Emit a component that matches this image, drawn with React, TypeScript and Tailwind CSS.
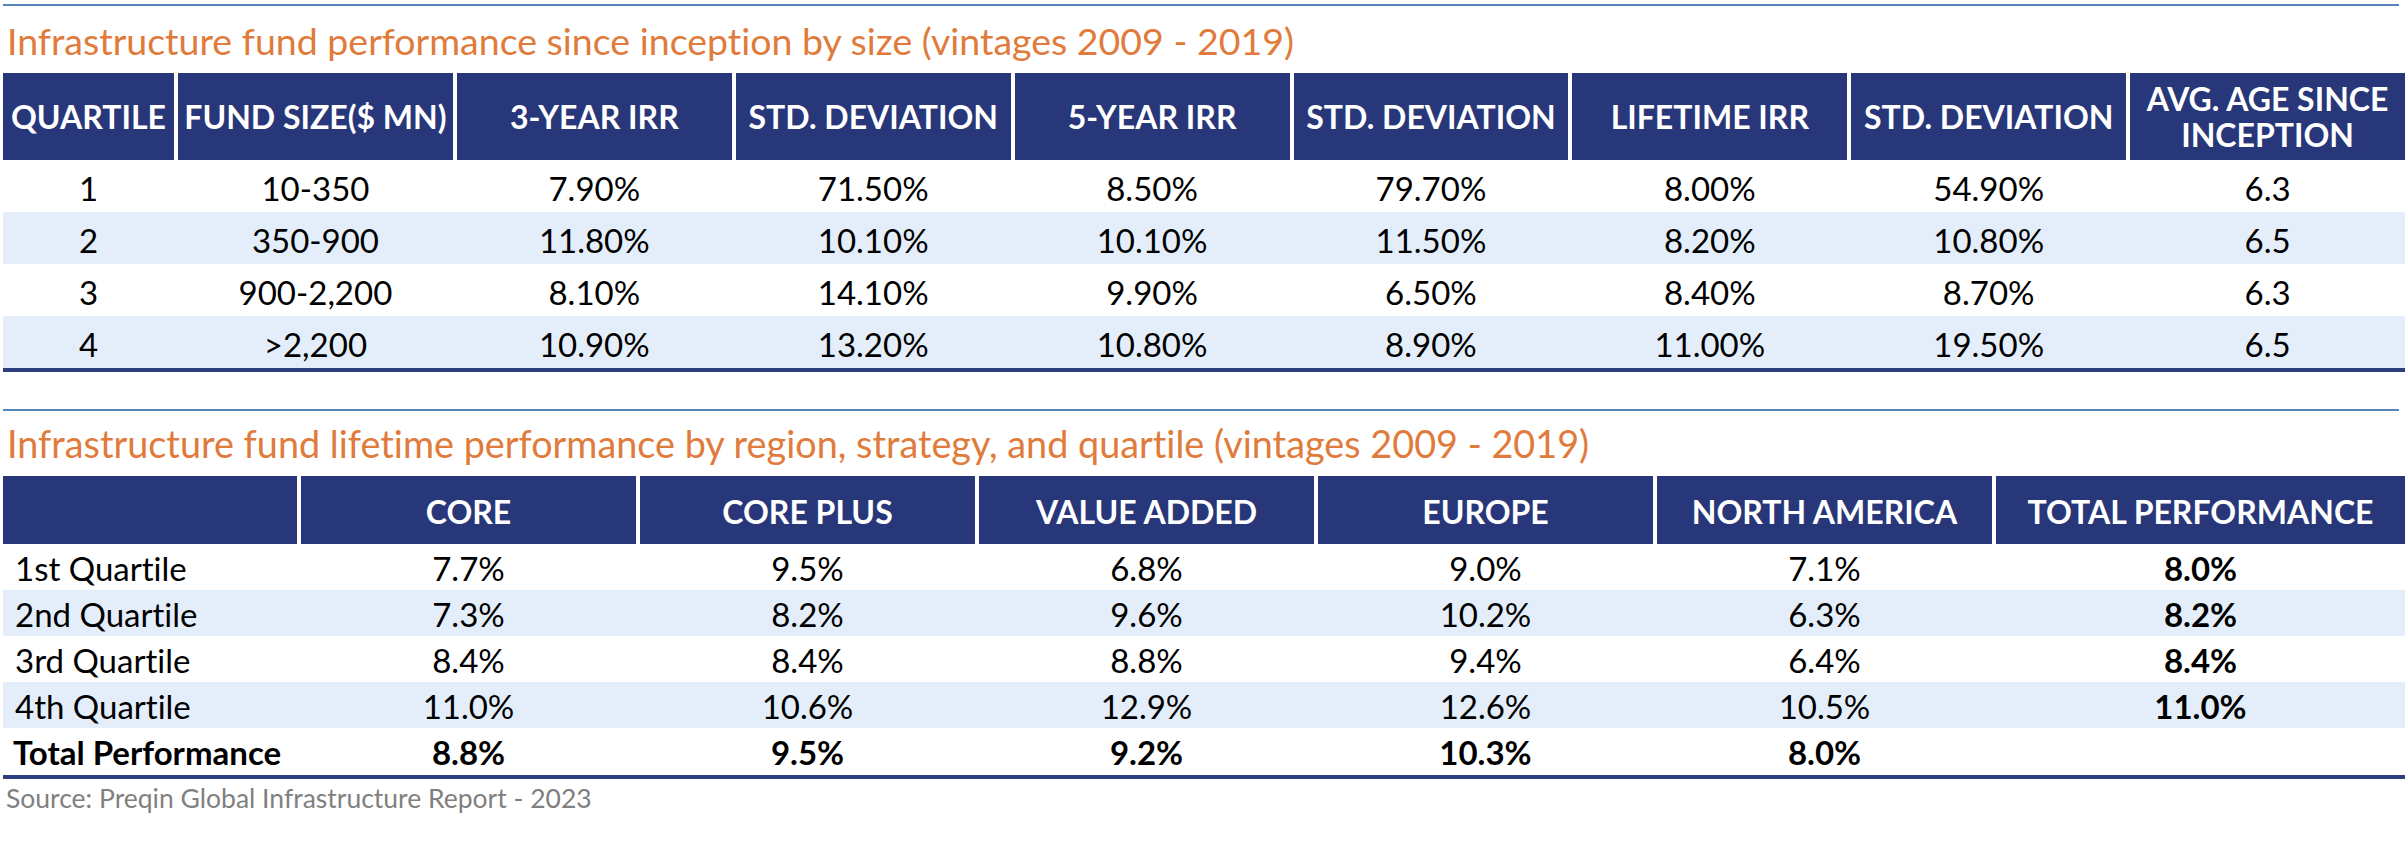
import React from "react";

const FONT = { fontFamily: "Lato, 'Open Sans', sans-serif" };

const topHeaders = [
  "QUARTILE",
  "FUND SIZE($ MN)",
  "3-YEAR IRR",
  "STD. DEVIATION",
  "5-YEAR IRR",
  "STD. DEVIATION",
  "LIFETIME IRR",
  "STD. DEVIATION",
  "AVG. AGE SINCE INCEPTION",
];

const topRows = [
  ["1", "10-350", "7.90%", "71.50%", "8.50%", "79.70%", "8.00%", "54.90%", "6.3"],
  ["2", "350-900", "11.80%", "10.10%", "10.10%", "11.50%", "8.20%", "10.80%", "6.5"],
  ["3", "900-2,200", "8.10%", "14.10%", "9.90%", "6.50%", "8.40%", "8.70%", "6.3"],
  ["4", ">2,200", "10.90%", "13.20%", "10.80%", "8.90%", "11.00%", "19.50%", "6.5"],
];

const bottomHeaders = ["", "CORE", "CORE PLUS", "VALUE ADDED", "EUROPE", "NORTH AMERICA", "TOTAL PERFORMANCE"];

const bottomRows = [
  ["1st Quartile", "7.7%", "9.5%", "6.8%", "9.0%", "7.1%", "8.0%"],
  ["2nd Quartile", "7.3%", "8.2%", "9.6%", "10.2%", "6.3%", "8.2%"],
  ["3rd Quartile", "8.4%", "8.4%", "8.8%", "9.4%", "6.4%", "8.4%"],
  ["4th Quartile", "11.0%", "10.6%", "12.9%", "12.6%", "10.5%", "11.0%"],
];
const totalRow = ["Total Performance", "8.8%", "9.5%", "9.2%", "10.3%", "8.0%", ""];

const topGrid = "grid grid-cols-[171px_repeat(8,1fr)] gap-x-[4px]";
const bottomGrid = "grid grid-cols-[294px_repeat(5,335px)_1fr] gap-x-[4px]";

export default function App() {
  return (
    <div
      className="w-[2408px] h-[844px] bg-white px-[3px] text-black overflow-hidden [font-variant-ligatures:none]"
      style={FONT}
    >
      {/* Section 1 */}
      <div className="pt-[4px]">
        <div className="h-[2px] bg-[#5586bb] mr-[6px]" />
        <div className="h-[67px] flex items-center pl-[4px] text-[37.5px] text-[#e07b3c] leading-none pt-[2px]">
          Infrastructure fund performance since inception by size (vintages 2009 - 2019)
        </div>
        <div className={`${topGrid} h-[87px]`}>
          {topHeaders.map((h, i) => (
            <div
              key={i}
              className="bg-[#283779] text-white font-bold text-[32px] leading-[36px] flex items-center justify-center text-center px-1"
            >
              {h}
            </div>
          ))}
        </div>
        {topRows.map((r, ri) => (
          <div key={ri} className={`${topGrid} h-[52px] ${ri % 2 === 1 ? "bg-[#e4eefa]" : "bg-white"}`}>
            {r.map((c, ci) => (
              <div key={ci} className="flex items-center justify-center text-[33px] pt-[4px] leading-none">
                {c}
              </div>
            ))}
          </div>
        ))}
        <div className="h-[4px] bg-[#2e3f80]" />
      </div>

      {/* Section 2 */}
      <div className="pt-[37px]">
        <div className="h-[2px] bg-[#5586bb] mr-[6px]" />
        <div className="h-[65px] flex items-center pl-[4px] text-[37.8px] text-[#e07b3c] leading-none">
          Infrastructure fund lifetime performance by region, strategy, and quartile (vintages 2009 - 2019)
        </div>
        <div className={`${bottomGrid} h-[68px]`}>
          {bottomHeaders.map((h, i) => (
            <div
              key={i}
              className="bg-[#283779] text-white font-bold text-[32px] leading-none flex items-center justify-center text-center pt-[4px]"
            >
              {h}
            </div>
          ))}
        </div>
        {bottomRows.map((r, ri) => (
          <div key={ri} className={`${bottomGrid} h-[46px] ${ri % 2 === 1 ? "bg-[#e4eefa]" : "bg-white"}`}>
            {r.map((c, ci) => (
              <div
                key={ci}
                className={`flex items-center text-[33px] leading-none pt-[2px] ${
                  ci === 0 ? "justify-start pl-[12px]" : "justify-center"
                } ${ci === 6 ? "font-bold" : ""}`}
              >
                {c}
              </div>
            ))}
          </div>
        ))}
        <div className={`${bottomGrid} h-[47px] bg-white`}>
          {totalRow.map((c, ci) => (
            <div
              key={ci}
              className={`flex items-center text-[33px] leading-none font-bold pt-[2px] ${
                ci === 0 ? "justify-start pl-[10px]" : "justify-center"
              }`}
            >
              {c}
            </div>
          ))}
        </div>
        <div className="h-[4px] bg-[#2e3f80]" />
        <div className="pl-[3px] pt-[6px] text-[26.5px] text-[#808080] leading-none">
          Source: Preqin Global Infrastructure Report - 2023
        </div>
      </div>
    </div>
  );
}
